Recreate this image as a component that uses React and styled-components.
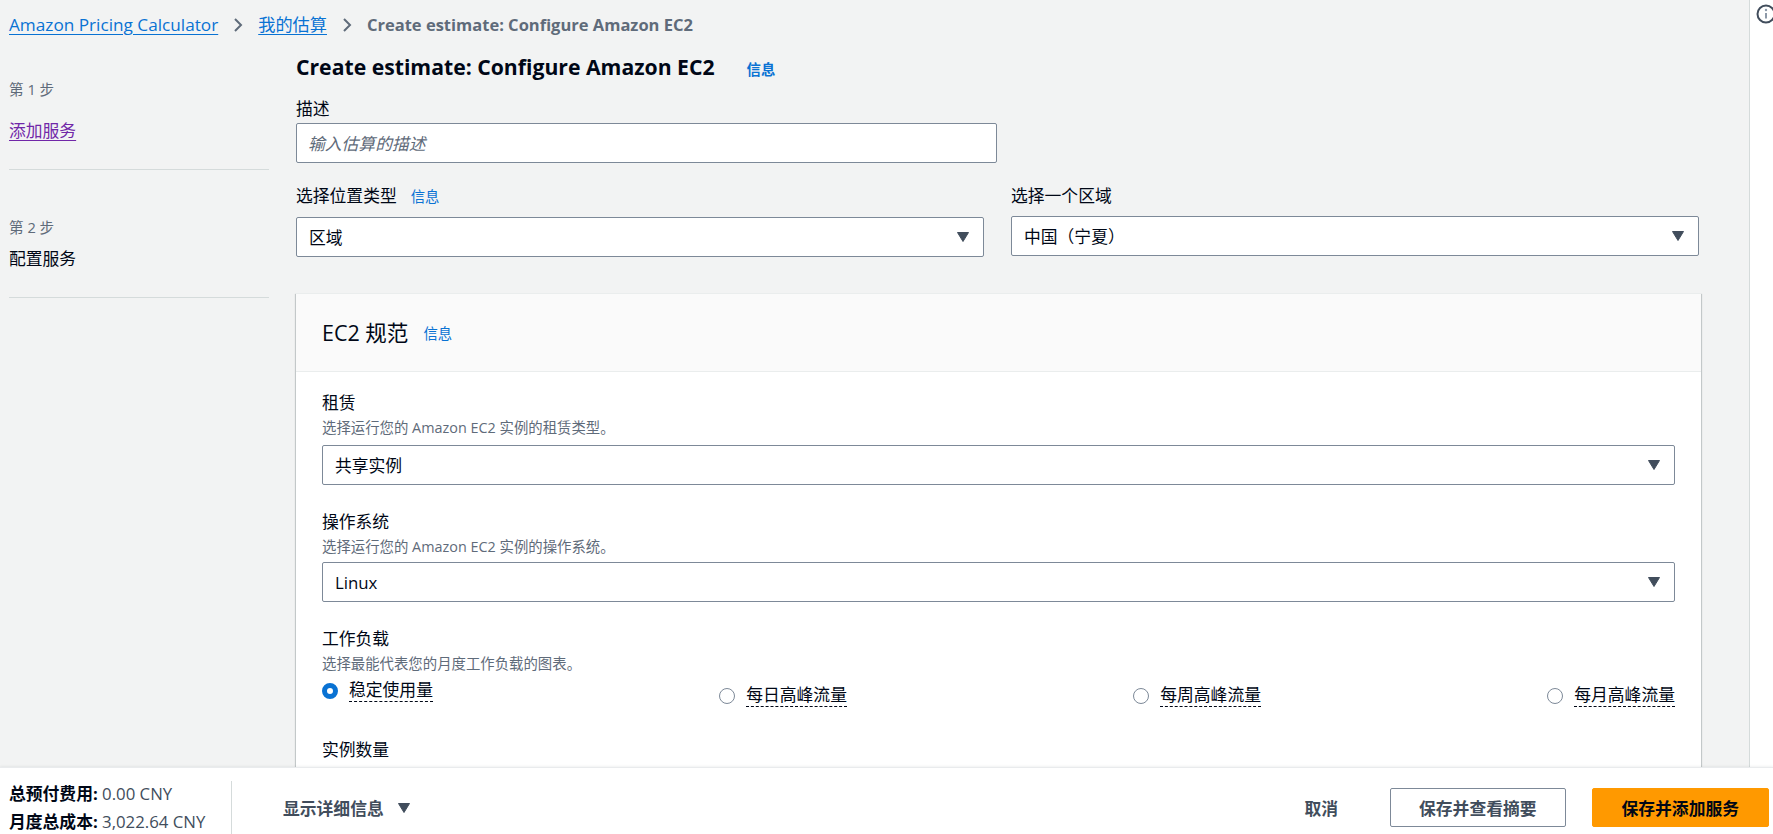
import React from 'react';
import styled, { createGlobalStyle } from 'styled-components';

//styles
const GlobalStyle = createGlobalStyle`
  html, body {
    margin: 0;
    padding: 0;
    overflow: hidden;
  }
  body {
    font-family: "Open Sans", "Noto Sans CJK SC", sans-serif;
    color: #000716;
    background: #f2f3f3;
  }
  * {
    box-sizing: border-box;
  }
`;

const Page = styled.div`
  display: flex;
  flex-direction: column;
  width: 1773px;
  height: 847px;
`;

const Body = styled.div`
  flex: 1;
  min-height: 0;
  display: flex;
  overflow: hidden;
`;

const Main = styled.main`
  flex: 1;
  min-width: 0;
  padding-left: 9px;
  background: #f2f3f3;
`;

const SideStrip = styled.aside`
  width: 24px;
  flex-shrink: 0;
  background: #fff;
  border-left: 1px solid #d5dbdb;
  overflow: hidden;
  padding: 3px 0 0 5px;
`;

const Crumbs = styled.nav`
  display: flex;
  align-items: center;
  gap: 12px;
  height: 50px;
  line-height: 24px;
`;

const CrumbLink = styled.a`
  font-size: 17.2px;
  color: #0972d3;
  text-decoration: underline;
  text-underline-offset: 3px;
  cursor: pointer;
`;

const CrumbCurrent = styled.span`
  font-size: 16.5px;
  color: #5f6b7a;
  font-weight: 700;
`;

const Columns = styled.div`
  display: grid;
  grid-template-columns: 260px 1405px;
  column-gap: 27px;
`;

const StepNav = styled.div``;

const Step = styled.div`
  padding: ${({ $top }) => $top}px 0 26px;
  border-bottom: 1px solid #d5dbdb;
`;

const StepNo = styled.div`
  font-size: 14.6px;
  line-height: 20px;
  color: #5f6b7a;
`;

const StepName = styled.div`
  margin-top: ${({ $gap }) => $gap}px;
  font-size: 16.8px;
  line-height: 24px;
  color: ${({ $link }) => $link ? "#7127a8" : "#000716"};
  text-decoration: ${({ $link }) => $link ? "underline" : "none"};
  text-underline-offset: 3px;
`;

const Content = styled.div`
  padding-top: 2px;
  display: flex;
  flex-direction: column;
`;

const TitleRow = styled.div`
  display: flex;
  align-items: baseline;
  gap: 32px;
`;

const Title = styled.h1`
  margin: 0;
  font-size: 21.2px;
  line-height: 30px;
  font-weight: 700;
`;

const InfoLink = styled.a`
  color: #0972d3;
  font-size: 14.4px;
  font-weight: ${({ $bold }) => $bold ? 700 : 400};
  text-decoration: none;
  cursor: pointer;
`;

const Field = styled.div`
  display: flex;
  flex-direction: column;
  margin-top: ${({ $top }) => $top || 0}px;
  width: ${({ $width }) => $width ? `${$width}px` : "auto"};
`;

const LabelRow = styled.div`
  display: flex;
  align-items: baseline;
  gap: 14px;
  font-size: 16.8px;
  line-height: 24px;
  margin-bottom: ${({ $space }) => $space}px;
`;

const Hint = styled.div`
  margin-top: 2px;
  margin-bottom: ${({ $space }) => $space ?? 6}px;
  font-size: 14.4px;
  line-height: 22px;
  color: #5f6b7a;
`;

const TextInput = styled.input`
  height: 40px;
  width: 100%;
  padding: 0 11px;
  border: 1px solid #7d8998;
  border-radius: 2px;
  background: #fff;
  font: inherit;
  font-size: 16.8px;
  color: #000716;
  outline: none;

  &::placeholder {
    color: #5f6b7a;
    font-style: italic;
  }
`;

const SelectBox = styled.div`
  height: 40px;
  display: flex;
  align-items: center;
  justify-content: space-between;
  padding: 0 14px 0 12px;
  border: 1px solid #7d8998;
  border-radius: 2px;
  background: #fff;
  font-size: 16.8px;
  cursor: pointer;
`;

const TwoCols = styled.div`
  display: grid;
  grid-template-columns: 688px 688px;
  column-gap: 27px;
  margin-top: 21px;
`;

const Panel = styled.section`
  margin-top: 36px;
  background: #fff;
  border-top: 1px solid #eaeded;
  box-shadow: 0 1px 1px 0 rgba(0, 28, 36, 0.3), 1px 1px 1px 0 rgba(0, 28, 36, 0.15),
    -1px 1px 1px 0 rgba(0, 28, 36, 0.15);
`;

const PanelHeader = styled.header`
  height: 78px;
  display: flex;
  align-items: center;
  gap: 15px;
  padding: 0 26px;
  background: #fafafa;
  border-bottom: 1px solid #eaeded;
`;

const PanelTitle = styled.h2`
  margin: 0;
  font-size: 21.5px;
  line-height: 30px;
  font-weight: 400;
`;

const PanelBody = styled.div`
  display: flex;
  flex-direction: column;
  gap: 25px;
  padding: 19px 26px 60px;
`;

const RadioGroup = styled.div`
  display: flex;
  justify-content: space-between;
  align-items: flex-start;
  padding-bottom: 6px;
`;

const RadioItem = styled.label`
  display: flex;
  align-items: center;
  gap: 11px;
  margin-top: ${({ $drop }) => $drop ? 5 : 0}px;
  font-size: 16.8px;
  cursor: pointer;
`;

const RadioDot = styled.span`
  width: 16px;
  height: 16px;
  flex-shrink: 0;
  border-radius: 50%;
  background: #fff;
  border: ${({ $on }) => $on ? "5px solid #0972d3" : "1.5px solid #7d8998"};
`;

const RadioText = styled.span`
  line-height: 22px;
  border-bottom: 1px dashed #000716;
`;

const Footer = styled.footer`
  height: 80px;
  flex-shrink: 0;
  display: flex;
  align-items: center;
  padding: 0 4px 0 9px;
  background: #fff;
  border-top: 1px solid #e9ebed;
  box-shadow: 0 -1px 2px rgba(0, 28, 36, 0.06);
`;

const Costs = styled.div`
  width: 222px;
  font-size: 16.8px;
  line-height: 28px;
  color: #414d5c;

  b {
    color: #000716;
  }
`;

const VRule = styled.div`
  width: 1px;
  height: 54px;
  background: #d5dbdb;
`;

const Toggle = styled.button`
  margin-left: 51px;
  display: flex;
  align-items: center;
  gap: 14px;
  padding: 0;
  border: none;
  background: none;
  font: inherit;
  font-size: 16.8px;
  font-weight: 700;
  color: #414d5c;
  cursor: pointer;
`;

const Actions = styled.div`
  margin-left: auto;
  display: flex;
  align-items: center;
`;

const Button = styled.button`
  height: 39px;
  padding: 0 ${({ $pad }) => $pad}px;
  margin-left: ${({ $space }) => $space || 0}px;
  border-radius: 2px;
  font: inherit;
  font-size: 16.8px;
  font-weight: 700;
  cursor: pointer;
  color: ${({ $kind }) => $kind === "primary" ? "#000716" : "#414d5c"};
  background: ${({ $kind }) => $kind === "primary" ? "#ff9900" : $kind === "link" ? "transparent" : "#fff"};
  border: 1px solid ${({ $kind }) => $kind === "primary" ? "#ff9900" : $kind === "link" ? "transparent" : "#7d8998"};
`;

const Chevron = () => (
    <svg width="16" height="16" viewBox="0 0 16 16">
        <polyline points="5,2 11,8 5,14" fill="none" stroke="#5f6b7a" strokeWidth="2" />
    </svg>
);

const Caret = () => (
    <svg width="12" height="10" viewBox="0 0 12 10">
        <polygon points="0.5,0.5 11.5,0.5 6,9.5" fill="#414d5c" stroke="#414d5c" strokeLinejoin="round" />
    </svg>
);

const Select = ({ value }) => (
    <SelectBox>
        <span>{value}</span>
        <Caret />
    </SelectBox>
);

const workloads = ["稳定使用量", "每日高峰流量", "每周高峰流量", "每月高峰流量"];

const App = () => {
    return (
        <Page>
            <GlobalStyle />
            <Body>
                <Main>
                    <Crumbs>
                        <CrumbLink>Amazon Pricing Calculator</CrumbLink>
                        <Chevron />
                        <CrumbLink>我的估算</CrumbLink>
                        <Chevron />
                        <CrumbCurrent>Create estimate: Configure Amazon EC2</CrumbCurrent>
                    </Crumbs>

                    <Columns>
                        <StepNav>
                            <Step $top={29}>
                                <StepNo>第 1 步</StepNo>
                                <StepName $gap={20} $link>添加服务</StepName>
                            </Step>
                            <Step $top={47}>
                                <StepNo>第 2 步</StepNo>
                                <StepName $gap={10}>配置服务</StepName>
                            </Step>
                        </StepNav>

                        <Content>
                            <TitleRow>
                                <Title>Create estimate: Configure Amazon EC2</Title>
                                <InfoLink $bold>信息</InfoLink>
                            </TitleRow>

                            <Field $top={15} $width={701}>
                                <LabelRow $space={2}>描述</LabelRow>
                                <TextInput placeholder="输入估算的描述" />
                            </Field>

                            <TwoCols>
                                <Field>
                                    <LabelRow $space={8}>
                                        选择位置类型 <InfoLink>信息</InfoLink>
                                    </LabelRow>
                                    <Select value="区域" />
                                </Field>
                                <Field>
                                    <LabelRow $space={8}>选择一个区域</LabelRow>
                                    <Select value="中国（宁夏）" />
                                </Field>
                            </TwoCols>

                            <Panel>
                                <PanelHeader>
                                    <PanelTitle>EC2 规范</PanelTitle>
                                    <InfoLink>信息</InfoLink>
                                </PanelHeader>
                                <PanelBody>
                                    <Field>
                                        <LabelRow $space={0}>租赁</LabelRow>
                                        <Hint>选择运行您的 Amazon EC2 实例的租赁类型。</Hint>
                                        <Select value="共享实例" />
                                    </Field>
                                    <Field>
                                        <LabelRow $space={0}>操作系统</LabelRow>
                                        <Hint $space={4}>选择运行您的 Amazon EC2 实例的操作系统。</Hint>
                                        <Select value="Linux" />
                                    </Field>
                                    <Field>
                                        <LabelRow $space={0}>工作负载</LabelRow>
                                        <Hint $space={4}>选择最能代表您的月度工作负载的图表。</Hint>
                                        <RadioGroup>
                                            {workloads.map((w, i) => (
                                                <RadioItem key={w} $drop={i > 0}>
                                                    <RadioDot $on={i === 0} />
                                                    <RadioText>{w}</RadioText>
                                                </RadioItem>
                                            ))}
                                        </RadioGroup>
                                    </Field>
                                    <Field>
                                        <LabelRow $space={0}>实例数量</LabelRow>
                                    </Field>
                                </PanelBody>
                            </Panel>
                        </Content>
                    </Columns>
                </Main>

                <SideStrip>
                    <svg width="22" height="22" viewBox="0 0 22 22">
                        <circle cx="11" cy="11" r="8.5" fill="none" stroke="#414d5c" strokeWidth="2" />
                        <circle cx="11" cy="7" r="1.2" fill="#8d99a8" />
                        <line x1="11" y1="10" x2="11" y2="15.5" stroke="#8d99a8" strokeWidth="2" />
                    </svg>
                </SideStrip>
            </Body>

            <Footer>
                <Costs>
                    <div><b>总预付费用:</b> 0.00 CNY</div>
                    <div><b>月度总成本:</b> 3,022.64 CNY</div>
                </Costs>
                <VRule />
                <Toggle>
                    显示详细信息
                    <Caret />
                </Toggle>
                <Actions>
                    <Button $kind="link" $pad={0}>取消</Button>
                    <Button $pad={28} $space={51}>保存并查看摘要</Button>
                    <Button $kind="primary" $pad={29} $space={26}>保存并添加服务</Button>
                </Actions>
            </Footer>
        </Page>
    );
};

export default App;
